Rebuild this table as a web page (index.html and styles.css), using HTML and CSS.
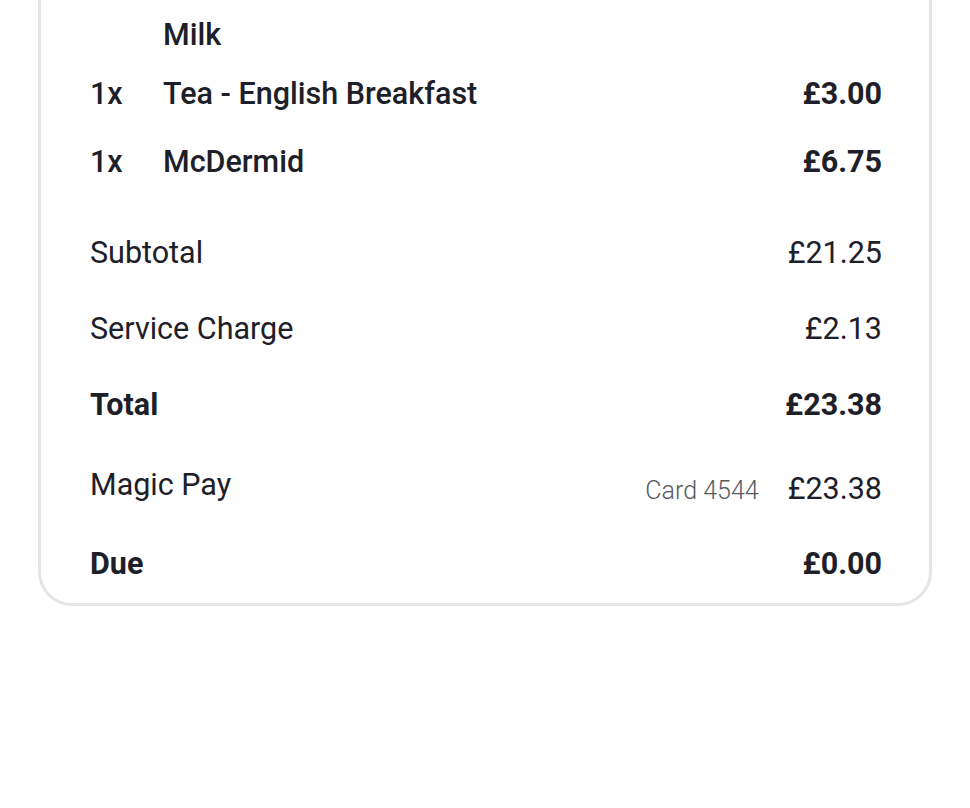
FILE: index.html
```html
<!DOCTYPE html>
<html lang="en">
<head>
<meta charset="utf-8">
<title>Receipt</title>
<link rel="stylesheet" href="styles.css">
</head>
<body>
<div class="card">
  <div class="items">
    <div class="item item--tail">
      <div class="mod">Milk</div>
    </div>
    <div class="item">
      <span class="qty">1x</span>
      <span class="name">Tea - English Breakfast</span>
      <span class="price">£3.00</span>
    </div>
    <div class="item">
      <span class="qty">1x</span>
      <span class="name">McDermid</span>
      <span class="price">£6.75</span>
    </div>
  </div>
  <div class="totals">
    <div class="row"><span>Subtotal</span><span>£21.25</span></div>
    <div class="row"><span>Service Charge</span><span>£2.13</span></div>
    <div class="row row--bold"><span>Total</span><span>£23.38</span></div>
    <div class="row row--pay">
      <span>Magic Pay</span>
      <span class="pay-right"><span class="card-label">Card 4544</span><span>£23.38</span></span>
    </div>
    <div class="row row--bold"><span>Due</span><span>£0.00</span></div>
  </div>
</div>
</body>
</html>
```

FILE: styles.css
```css
html, body {
  margin: 0;
  padding: 0;
  background: #ffffff;
}

body {
  font-family: Roboto, "Noto Sans", sans-serif;
  color: #1d2029;
  font-size: 30.5px;
  line-height: 36px;
}

.card {
  margin: 0 38px;
  border: 3px solid #e5e5e5;
  border-top: none;
  border-radius: 0 0 34px 34px;
  padding: 0 47px 21px 49px;
}

.items {
  display: flex;
  flex-direction: column;
}

.item {
  display: flex;
  align-items: baseline;
  padding: 16px 0;
  font-weight: 500;
}

.item--tail {
  padding: 17px 0 7px 73px;
}

.qty {
  width: 73px;
  flex: none;
}

.name {
  flex: 1;
}

.price {
  font-weight: 700;
}

.totals {
  display: flex;
  flex-direction: column;
  gap: 40px;
  padding-top: 39px;
}

.row {
  display: flex;
  justify-content: space-between;
  align-items: flex-start;
}

.row--bold {
  font-weight: 700;
}

.row--pay {
  margin: 4px 0 1px;
}

.pay-right {
  display: flex;
  align-items: baseline;
  gap: 29px;
  margin-top: 4px;
  margin-bottom: -4px;
}

.card-label {
  font-weight: 300;
  font-size: 25px;
  color: #555a60;
}
```
